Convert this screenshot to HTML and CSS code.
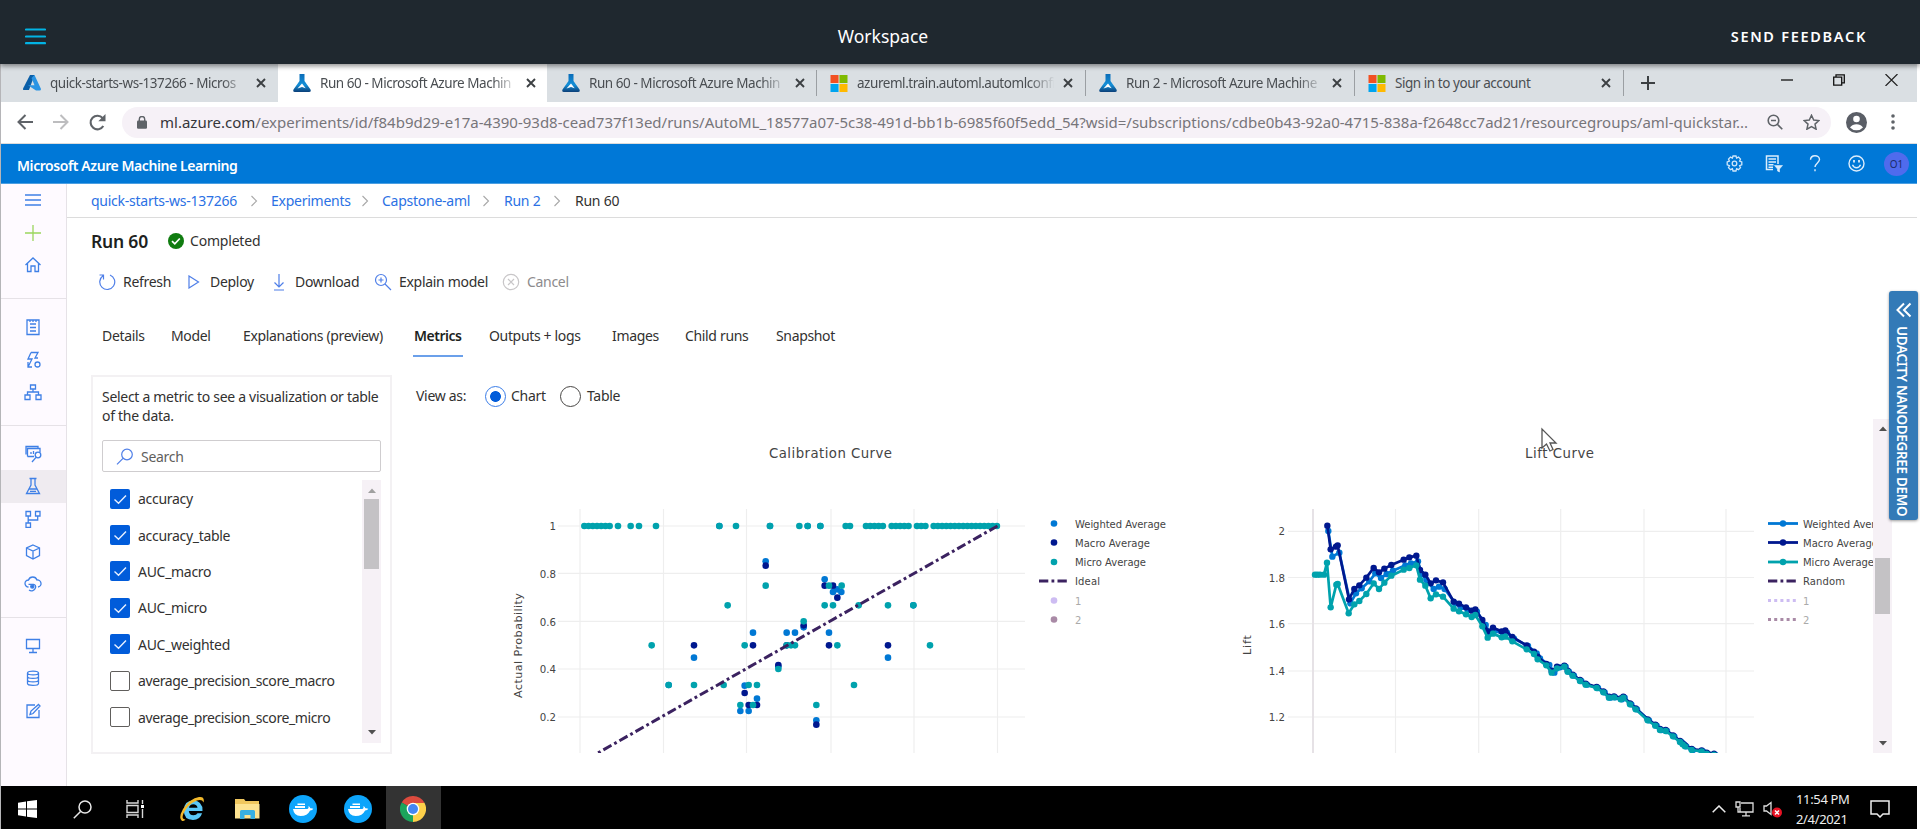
FILE: index.html
```html
<!DOCTYPE html>
<html lang="en">
<head>
<meta charset="utf-8">
<title>Workspace</title>
<link rel="stylesheet" href="styles.css">
</head>
<body>
<svg width="0" height="0" class="defs">
  <defs>
    <linearGradient id="flaskFill" x1="0" y1="0" x2="0" y2="1"><stop offset="0" stop-color="#0a6cb8"/><stop offset=".6" stop-color="#1490d8"/><stop offset="1" stop-color="#0b3f78"/></linearGradient>
    <symbol id="flask" viewBox="0 0 18 18"><path d="M6.500 0h5v7l6 8.500q1 2.500-1.500 2.500h-14q-2.500 0-1.500-2.500l6-8.500z" fill="url(#flaskFill)"/><path d="M9 9.500l3.700 4.800-3.700-1.300-4.500 1.600z" fill="#fff"/></symbol>
    <symbol id="ms" viewBox="0 0 18 18"><path d="M0 0h8.500v8.500H0z" fill="#f25022"/><path d="M9.500 0H18v8.500H9.500z" fill="#7fba00"/><path d="M0 9.500h8.500V18H0z" fill="#00a4ef"/><path d="M9.500 9.500H18V18H9.500z" fill="#ffb900"/></symbol>
    <symbol id="close" viewBox="0 0 10 10"><path d="M1 1l8 8M9 1l-8 8" stroke="#3c4043" stroke-width="1.900" fill="none"/></symbol>
    <symbol id="whale" viewBox="0 0 28 28"><circle cx="14" cy="14" r="14" fill="#0da5fb"/><path d="M4 14h14.500q1.500-.5 1-3 1.500.8 1.800 2.200 1.700-.2 3 .5-1 1.900-3.200 1.800Q18.500 21 11.500 21 5 21 4 14z" fill="#fff"/><path d="M6 11h10v2H6zM8.500 8.500h7.500V10H8.500z" fill="#fff"/></symbol>
    <symbol id="up" viewBox="0 0 8 5"><path d="M0 5L4 .5 8 5z"/></symbol>
    <symbol id="down" viewBox="0 0 8 5"><path d="M0 0l4 4.500L8 0z"/></symbol>
    <symbol id="crumb" viewBox="0 0 8 12"><path d="M1.500 1l5 5-5 5" fill="none" stroke="#a8a8a8" stroke-width="1.100"/></symbol>
    <symbol id="tick" viewBox="0 0 20 20"><path d="M4.500 10.500l4 3.700 7.500-7.700" fill="none" stroke="#e8f0ff" stroke-width="1.400"/></symbol>
  </defs>
</svg>

<header class="workspace-bar">
  <svg class="menu" width="21" height="17" viewBox="0 0 21 17"><path d="M1 1.500h19M1 8.500h19M1 15.200h19" stroke="#02b3e4" stroke-width="2.200" stroke-linecap="round"/></svg>
  <h1>Workspace</h1>
  <a class="feedback">SEND FEEDBACK</a>
</header>

<div class="desktop">
  <div class="tab-strip">
    <div class="tab first">
      <svg width="18" height="16" viewBox="0 0 18 16"><path d="M7 0h4.500L6 15H1Q-.4 15 .2 13.300z" fill="#0b5fa8"/><path d="M11.500 0L18 14q0 1.500-1.500 1.500H13L5 10.300h6.500L8.500 3z" fill="#2a94e4"/></svg>
      <span class="tab-title fade">quick-starts-ws-137266 - Micros</span><svg class="x" width="10" height="10"><use href="#close"/></svg>
    </div>
    <div class="tab active">
      <svg width="18" height="18"><use href="#flask"/></svg>
      <span class="tab-title fade">Run 60 - Microsoft Azure Machin</span><svg class="x" width="10" height="10"><use href="#close"/></svg>
    </div>
    <div class="tab third">
      <svg width="18" height="18"><use href="#flask"/></svg>
      <span class="tab-title fade">Run 60 - Microsoft Azure Machin</span><svg class="x" width="10" height="10"><use href="#close"/></svg>
    </div>
    <div class="tab lined">
      <svg width="18" height="17"><use href="#ms"/></svg>
      <span class="tab-title fade">azureml.train.automl.automlconfi</span><svg class="x" width="10" height="10"><use href="#close"/></svg>
    </div>
    <div class="tab lined">
      <svg width="18" height="18"><use href="#flask"/></svg>
      <span class="tab-title fade">Run 2 - Microsoft Azure Machine</span><svg class="x" width="10" height="10"><use href="#close"/></svg>
    </div>
    <div class="tab lined">
      <svg width="18" height="17"><use href="#ms"/></svg>
      <span class="tab-title">Sign in to your account</span><svg class="x" width="10" height="10"><use href="#close"/></svg>
    </div>
    <div class="new-tab"><svg width="14" height="14" viewBox="0 0 14 14"><path d="M7 0v14M0 7h14" stroke="#3c4043" stroke-width="2"/></svg></div>
    <div class="window-buttons">
      <svg width="12" height="12" viewBox="0 0 12 12"><path d="M0 6h12" stroke="#111" stroke-width="1.300"/></svg>
      <svg width="12" height="12" viewBox="0 0 12 12"><path d="M.7 3.200h8v8h-8zM3 3V.8h8.300v8H9" fill="none" stroke="#111" stroke-width="1.300"/></svg>
      <svg width="13" height="12" viewBox="0 0 13 12"><path d="M.5 0l12 12M12.500 0L.5 12" stroke="#222" stroke-width="1.200"/></svg>
    </div>
  </div>

  <div class="address-row">
    <svg width="16" height="16" viewBox="0 0 16 16"><path d="M16 8H1.500M8.500 1L1.500 8l7 7" fill="none" stroke="#5f6368" stroke-width="2"/></svg>
    <svg width="16" height="16" viewBox="0 0 16 16"><path d="M0 8h14.500M7.500 1l7 7-7 7" fill="none" stroke="#bdbdbf" stroke-width="2"/></svg>
    <svg width="17" height="17" viewBox="0 0 17 17"><path d="M14.300 12A6.800 6.800 0 1 1 13.700 4.200" fill="none" stroke="#5f6368" stroke-width="2.100"/><path d="M16.500 0v7.200H9.300z" fill="#5f6368"/></svg>
    <div class="url">
      <svg width="10" height="13" viewBox="0 0 10 13"><rect y="4.500" width="10" height="8.300" rx="1.200" fill="#5f6368"/><path d="M2.300 5V3.200a2.700 2.700 0 0 1 5.400 0V5" fill="none" stroke="#5f6368" stroke-width="1.400"/></svg>
      <span class="url-text"><b>ml.azure.com</b>/experiments/id/f84b9d29-e17a-4390-93d8-cead737f13ed/runs/AutoML_18577a07-5c38-491d-bb1b-6985f60f5edd_54?wsid=/subscriptions/cdbe0b43-92a0-4715-838a-f2648cc7ad21/resourcegroups/aml-quickstar...</span>
      <svg width="16" height="16" viewBox="0 0 16 16"><circle cx="6.500" cy="6.500" r="5.300" fill="none" stroke="#5f6368" stroke-width="1.600"/><path d="M10.300 10.300l5 5M4 6.500h5" stroke="#5f6368" stroke-width="1.600"/></svg>
      <svg width="17" height="16" viewBox="0 0 17 16"><path d="M8.500 1.300l2.200 4.800 5.200.5-3.900 3.500 1.100 5.100-4.600-2.700-4.600 2.700L5 10.100 1.100 6.600l5.200-.5z" fill="none" stroke="#5f6368" stroke-width="1.500"/></svg>
    </div>
    <svg width="21" height="21" viewBox="0 0 21 21"><circle cx="10.500" cy="10.500" r="10.500" fill="#5a5e66"/><circle cx="10.500" cy="7" r="3.300" fill="#fff"/><path d="M4 15.500q2.500-3.300 6.500-3.300t6.500 3.300q-2.500 2.800-6.500 2.800T4 15.500z" fill="#fff"/></svg>
    <svg width="4" height="16" viewBox="0 0 4 16" fill="#5f6368"><circle cx="2" cy="2" r="1.800"/><circle cx="2" cy="8" r="1.800"/><circle cx="2" cy="14" r="1.800"/></svg>
  </div>

  <div class="product-bar">
    <span class="product">Microsoft Azure Machine Learning</span>
    <svg class="gear" width="17" height="17" viewBox="0 0 17 17" fill="none" stroke="#cfe6fa" stroke-width="1.300"><circle cx="8.500" cy="8.500" r="2.300"/><path d="M7 1h3l.6 2 1.900-.9 2 2-.9 2 2.200.8v3l-2.200.8.9 1.900-2 2-1.900-.9L10 16H7l-.6-2.300-1.900.9-2-2 .9-1.900-2.200-.8v-3l2.200-.8-.9-2 2-2 1.900.9z"/></svg>
    <svg class="feed" width="18" height="18" viewBox="0 0 18 18" fill="none" stroke="#dcedfc" stroke-width="1.500"><path d="M8 14.500H1.500V1H13v8"/><path d="M3.500 4H11M3.500 7H11M3.500 9.700h5M3.500 12.300H8"/><path d="M9.500 10.500h8L14.500 14v3l-2-1v-2z" fill="#dcedfc" stroke-width=".6"/></svg>
    <svg class="help" width="12" height="17" viewBox="0 0 12 17" fill="none" stroke="#dcedfc" stroke-width="1.400"><path d="M1.500 4.800C1.500 2.300 3.500.8 6 .8s4.500 1.500 4.500 3.800C10.500 7.500 6 8.500 6 12M6 14.300v2"/></svg>
    <svg class="smile" width="17" height="17" viewBox="0 0 17 17" fill="none" stroke="#dcedfc" stroke-width="1.400"><circle cx="8.500" cy="8.500" r="7.500"/><path d="M4.500 9.800q1.200 3 4 3t4-3"/><path d="M6 5v2.500M11 5v2.500" stroke-width="1.800"/></svg>
    <span class="avatar">O1</span>
  </div>

  <div class="app">
    <nav class="rail">
      <div class="rail-item"><svg width="18" height="18" viewBox="0 0 18 18"><path d="M1 4h16M1 9h16M1 14h16"/></svg></div>
      <div class="rail-item"><svg class="green" width="18" height="18" viewBox="0 0 18 18"><path d="M1 9h16M9 1v16"/></svg></div>
      <div class="rail-item"><svg width="18" height="18" viewBox="0 0 18 18"><path d="M1.500 9L9 2l7.500 7M3.500 7.500V15.500H7V10h4v5.500h3.500V7.500"/></svg></div>
      <hr>
      <div class="rail-item"><svg width="18" height="18" viewBox="0 0 18 18"><path d="M3 2h12v14.500H3zM6 2v2M9 2v2M12 2v2M6 6h6M6 9.500h6M6 13h6"/></svg></div>
      <div class="rail-item"><svg width="18" height="18" viewBox="0 0 18 18"><path d="M7 1.500h7L11 7h3M7 1.500L4 8h4l-4 8M4 11v5h4"/><circle cx="13.500" cy="13.500" r="2.500"/></svg></div>
      <div class="rail-item"><svg width="18" height="18" viewBox="0 0 18 18"><path d="M6.500 2h5v4h-5zM1 12h5v4.500H1zM12 12h5v4.500h-5zM9 6v3M3.500 12V9h11v3"/></svg></div>
      <hr>
      <div class="rail-item"><svg width="18" height="18" viewBox="0 0 18 18"><path d="M2 9.500V1.500h12v2M3.500 11.500V3.500H16V7M10 11.500H3.500M7 7v2M9.500 6v3"/><circle cx="14" cy="10" r="2.800"/><path d="M12 12.300L8 17"/></svg></div>
      <div class="rail-item selected"><svg width="18" height="18" viewBox="0 0 18 18"><path d="M5.500 1.500h7M7 1.500V8L2.500 16.500h13L11 8V1.500M5 12h8M6 14.300h6"/></svg></div>
      <div class="rail-item"><svg width="18" height="18" viewBox="0 0 18 18"><path d="M2 1.500h4.500V6H2zM11.500 1.500H16V6h-4.500zM2 13h4.500v4.500H2zM4.200 6v7M13.700 6v4H4.200"/></svg></div>
      <div class="rail-item"><svg width="18" height="18" viewBox="0 0 18 18"><path d="M9 2l6.500 3v7.500L9 16l-6.500-3.500V5zM2.500 5L9 8l6.500-3M9 8v8"/></svg></div>
      <div class="rail-item"><svg width="18" height="18" viewBox="0 0 18 18"><path d="M4.500 12a3.500 3.500 0 0 1 0-7 4.500 4.500 0 0 1 8.500 0 3.500 3.500 0 0 1 1 7"/><circle cx="8.300" cy="11.500" r="1.600" fill="#2f74e0"/><path d="M4.500 9.300H9.500a2.500 2.500 0 0 1 2 3.500 4.200 4.200 0 0 1-6.500 2.200"/></svg></div>
      <hr>
      <div class="rail-item"><svg width="18" height="18" viewBox="0 0 18 18"><path d="M2.500 2.500h13v9h-13zM9 11.500v4M5 15.500h8"/></svg></div>
      <div class="rail-item"><svg width="18" height="18" viewBox="0 0 18 18"><path d="M3.500 4c0-2.500 11-2.500 11 0v10.500c0 2.500-11 2.500-11 0zM3.500 4c0 2.500 11 2.500 11 0M3.500 7.500c0 2.500 11 2.500 11 0M3.500 11c0 2.500 11 2.500 11 0"/></svg></div>
      <div class="rail-item"><svg width="18" height="18" viewBox="0 0 18 18"><path d="M11 3H3v12.500h12V8M6 12.500l1-3.500 7.500-6.500L16 4l-7 7.500z"/></svg></div>
    </nav>

    <main class="main">
      <div class="crumbs">
        <a>quick-starts-ws-137266</a><svg width="8" height="12"><use href="#crumb"/></svg>
        <a>Experiments</a><svg width="8" height="12"><use href="#crumb"/></svg>
        <a>Capstone-aml</a><svg width="8" height="12"><use href="#crumb"/></svg>
        <a>Run 2</a><svg width="8" height="12"><use href="#crumb"/></svg>
        <span>Run 60</span>
      </div>

      <div class="run-head">
        <h2>Run 60</h2>
        <svg width="16" height="16" viewBox="0 0 16 16"><circle cx="8" cy="8" r="8" fill="#107c10"/><path d="M4 8.200l2.800 2.600 5-5.300" fill="none" stroke="#fff" stroke-width="1.700"/></svg>
        <span>Completed</span>
      </div>

      <div class="actions">
        <svg width="18" height="18" viewBox="0 0 18 18"><path d="M12 2a7.500 7.500 0 1 1-7 .8M5.500 6.500V2H1.500"/></svg><span>Refresh</span>
        <svg width="12" height="14" viewBox="0 0 12 14"><path d="M1 1l9.500 6L1 13z"/></svg><span>Deploy</span>
        <svg width="12" height="17" viewBox="0 0 12 17"><path d="M6 0v13M1.500 8.500L6 13l4.500-4.500M1 16h10"/></svg><span>Download</span>
        <svg width="18" height="18" viewBox="0 0 18 18"><circle cx="7" cy="7" r="5.500"/><path d="M11 11l6 6M4.500 7h5M7 4.500v5"/></svg><span>Explain model</span>
        <svg class="off" width="18" height="18" viewBox="0 0 18 18"><circle cx="9" cy="9" r="7.700"/><path d="M6 6l6 6M12 6l-6 6"/></svg><span class="off">Cancel</span>
      </div>

      <div class="pivots">
        <span>Details</span><span>Model</span><span>Explanations (preview)</span><span class="current">Metrics</span><span>Outputs + logs</span><span>Images</span><span>Child runs</span><span>Snapshot</span>
      </div>

      <div class="body">
        <section class="picker">
          <p><span>Select a metric to see a visualization or table</span><br><span>of the data.</span></p>
          <div class="search"><svg width="18" height="17" viewBox="0 0 18 17"><circle cx="11" cy="6.500" r="5.300"/><path d="M7 10.300L1 16.300"/></svg><span>Search</span></div>
          <div class="list">
            <ul>
              <li><i class="box on"><svg width="20" height="20"><use href="#tick"/></svg></i><span>accuracy</span></li>
              <li><i class="box on"><svg width="20" height="20"><use href="#tick"/></svg></i><span>accuracy_table</span></li>
              <li><i class="box on"><svg width="20" height="20"><use href="#tick"/></svg></i><span>AUC_macro</span></li>
              <li><i class="box on"><svg width="20" height="20"><use href="#tick"/></svg></i><span>AUC_micro</span></li>
              <li><i class="box on"><svg width="20" height="20"><use href="#tick"/></svg></i><span>AUC_weighted</span></li>
              <li><i class="box"></i><span class="long">average_precision_score_macro</span></li>
              <li><i class="box"></i><span class="long">average_precision_score_micro</span></li>
            </ul>
            <div class="scroll small"><svg width="8" height="5" fill="#a0a0a0"><use href="#up"/></svg><i class="thumb"></i><svg class="end" width="8" height="5" fill="#505050"><use href="#down"/></svg></div>
          </div>
        </section>

        <section class="results">
          <div class="view-as">
            <span>View as:</span><i class="radio on"></i><span>Chart</span><i class="radio"></i><span>Table</span>
          </div>
          <div class="charts">
            <svg class="chart" id="calibration" width="800" height="334" viewBox="400 419 800 334">
              <text class="title" x="769" y="458" textLength="123">Calibration Curve</text>
              <path class="grid" d="M580 509v244M663.500 509v244M746.500 509v244M831 509v244M914 509v244M997.500 509v244M558 526h467M558 573.300h467M558 621.300h467M558 669h467M558 717h467"/>
              <g class="ticks"><text x="556" y="530">1</text><text x="556" y="577.500">0.8</text><text x="556" y="625.500">0.6</text><text x="556" y="673">0.4</text><text x="556" y="721">0.2</text></g>
              <text class="axis" transform="translate(522 698) rotate(-90)" textLength="105">Actual Probability</text>
              <g class="dots"></g>
              <path class="ideal" d="M997.500 526L597 753.500"/>
              <g class="legend">
                <circle cx="1054" cy="523.500" r="3.300" fill="#0078d4"/><circle cx="1054" cy="542.500" r="3.300" fill="#00188f"/><circle cx="1054" cy="562" r="3.300" fill="#00a2ad"/>
                <path class="ideal" d="M1039 581h28.500"/>
                <circle cx="1054" cy="600.500" r="3.300" fill="#cdbcf2"/><circle cx="1054" cy="619.500" r="3.300" fill="#a98aa6"/>
                <text x="1075" y="528" textLength="91">Weighted Average</text><text x="1075" y="547" textLength="75">Macro Average</text><text x="1075" y="566" textLength="71">Micro Average</text><text x="1075" y="585" textLength="25">Ideal</text><text class="dim" x="1075" y="604.500">1</text><text class="dim" x="1075" y="623.500">2</text>
              </g>
            </svg>
            <svg class="chart" id="lift" width="673" height="334" viewBox="1200 419 673 334">
              <text class="title" x="1525" y="458" textLength="69">Lift Curve</text>
              <path class="grid" d="M1395.500 509v244M1478.700 509v244M1560.700 509v244M1644 509v244M1726 509v244M1288 531.300h466M1288 577.500h466M1288 623.700h466M1288 671h466M1288 717h466"/>
              <path class="zero" d="M1313 509v244"/>
              <g class="ticks"><text x="1285" y="535">2</text><text x="1285" y="581.500">1.8</text><text x="1285" y="628">1.6</text><text x="1285" y="675">1.4</text><text x="1285" y="721">1.2</text></g>
              <text class="axis" transform="translate(1251 655) rotate(-90)" textLength="20">Lift</text>
              <g class="lines"></g>
              <g class="legend">
                <g class="keys"><path d="M1768 523.500h30" stroke="#0078d4"/><circle cx="1783" cy="523.500" r="3.200" fill="#0078d4"/><path d="M1768 542.500h30" stroke="#00188f"/><circle cx="1783" cy="542.500" r="3.200" fill="#00188f"/><path d="M1768 562h30" stroke="#00a2ad"/><circle cx="1783" cy="562" r="3.200" fill="#00a2ad"/>
                <path class="ideal" d="M1768 581h28.500"/><path class="dotted" d="M1768 600.500h28.500" stroke="#cdbcf2"/><path class="dotted" d="M1768 619.500h28.500" stroke="#a98aa6"/></g>
                <text x="1803" y="528" textLength="91">Weighted Average</text><text x="1803" y="547" textLength="75">Macro Average</text><text x="1803" y="566" textLength="71">Micro Average</text><text x="1803" y="585" textLength="42">Random</text><text class="dim" x="1803" y="604.500">1</text><text class="dim" x="1803" y="623.500">2</text>
              </g>
              <path d="M1542 429v19l4.500-4 3.500 7 3-1.500-3-6.500h6z" fill="#fff" stroke="#555" stroke-width="1.300"/>
            </svg>
            <div class="scroll large"><svg width="8" height="5" fill="#505050"><use href="#up"/></svg><i class="thumb"></i><svg class="end" width="8" height="5" fill="#505050"><use href="#down"/></svg></div>
          </div>
        </section>
      </div>
    </main>
  </div>

  <footer class="taskbar">
    <div class="cell"><svg width="19" height="18" viewBox="0 0 19 18" fill="#fff"><path d="M0 2.700L8 1.500v7H0zM9 1.300L19 0v8.500H9zM0 9.500h8v7L0 15.300zM9 9.500h10V18L9 16.700z"/></svg></div>
    <div class="cell"><svg width="19" height="19" viewBox="0 0 19 19" fill="none" stroke="#e8e8e8" stroke-width="1.500"><circle cx="12" cy="7" r="6"/><path d="M7.500 11.500L.8 18.300"/></svg></div>
    <div class="cell views"><svg width="19" height="18" viewBox="0 0 19 18" fill="none" stroke="#d8d8d8" stroke-width="1.400"><path d="M1 0v3h11V0M1 18v-3h11v3M1 5.500h11v7H1zM16.500 0v4M16.500 9v9"/><path d="M15 5h3v3h-3z" fill="#fff" stroke="none"/></svg></div>
    <div class="cell"><svg width="27" height="26" viewBox="0 0 27 26"><path d="M23.500 15H9.800q.4 4.200 4.700 4.200 3 0 4-1.900h4.600Q21 24 14 24 4.800 24 4.800 14.300 5 4.800 14.200 4.500q9.800.5 9.300 10.500zM10 11.700h8.500q-.5-3.500-4.200-3.500T10 11.700z" fill="#5ac8f7"/><path d="M3 25Q-1 22 4 13 11 2.500 20 1q6-.8 4.500 5.500Q23.500 3 18 4.500 9 8 4.500 17.500 2 23.500 6.500 23.500 5 25.300 3 25z" fill="#f2b92c"/></svg></div>
    <div class="cell"><svg width="25" height="20" viewBox="0 0 25 20"><path d="M0 2V0h9l1.500 2H24v17H0z" fill="#f0c75e"/><path d="M0 5h24.500v14.500H0z" fill="#fde391"/><path d="M5 20v-7.500q0-1.500 1.500-1.500h12q1.500 0 1.500 1.500V20h-4.500v-4h-6v4z" fill="#38b0e3"/></svg></div>
    <div class="cell"><svg width="28" height="28"><use href="#whale"/></svg></div>
    <div class="cell"><svg width="28" height="28"><use href="#whale"/></svg></div>
    <div class="cell lit"><svg width="26" height="26" viewBox="0 0 26 26"><path d="M13 13L1.740 6.500A13 13 0 0 1 24.260 6.500z" fill="#dd4b3e"/><path d="M13 13L24.260 6.500A13 13 0 0 1 13 26z" fill="#fdd04a"/><path d="M13 13v13A13 13 0 0 1 1.740 6.500z" fill="#1ca45c"/><path d="M13 7h11.500l-6 9-5.500 10 5-9z" fill="#fdd04a"/><circle cx="13" cy="13" r="6.300" fill="#fff"/><circle cx="13" cy="13" r="5" fill="#4587f3"/></svg></div>
    <div class="tray">
      <svg width="14" height="8" viewBox="0 0 14 8" fill="none" stroke="#eee" stroke-width="1.500"><path d="M.7 7.200L7 1l6.300 6.200"/></svg>
      <svg width="19" height="16" viewBox="0 0 19 16" fill="none" stroke="#ddd" stroke-width="1.300"><path d="M6 2h12v9H5V7M11 11v3.500M7 14.800h8M1 1h4v5H1zM3 6v5h2"/></svg>
      <svg width="20" height="17" viewBox="0 0 20 17"><path d="M1 5h2.500L8 1.500v12L3.500 10H1z" fill="none" stroke="#ddd" stroke-width="1.300"/><circle cx="14" cy="11.500" r="5" fill="#e81123"/><path d="M12 9.500l4 4M16 9.500l-4 4" stroke="#fff" stroke-width="1.500"/></svg>
      <div class="clock"><span>11:54 PM</span><span>2/4/2021</span></div>
      <svg width="20" height="18" viewBox="0 0 20 18" fill="none" stroke="#eee" stroke-width="1.500"><path d="M1 1h18v13h-6l-3 3-3-3H1z"/></svg>
    </div>
  </footer>
</div>

<aside class="side-tab">
  <svg width="16" height="16" viewBox="0 0 16 16"><path d="M8 1.500L1.500 8 8 14.500M14.500 1.500L8 8l6.500 6.500" fill="none" stroke="#fff" stroke-width="2"/></svg>
  <span>UDACITY NANODEGREE DEMO</span>
</aside>
<script src="charts.js"></script>
</body>
</html>
```
FILE: charts.js
```js
const NS = 'http://www.w3.org/2000/svg';
const BLUE = '#0078d4', NAVY = '#00188f', TEAL = '#00a2ad';

function add(parent, name, attrs) {
  const el = document.createElementNS(NS, name);
  for (const key in attrs) el.setAttribute(key, attrs[key]);
  parent.appendChild(el);
}

// Calibration scatter, in thirds of a pixel from the plot corner at (500, 430).
const weighted = [[797,394],[582,683],[759,608],[734,767],[721,843],[746,843],[771,806],[860,608],[885,608],[911,592],[835,710],[949,871],[974,448],[999,486],[1012,478],[1024,486],[987,608],[1164,683],[506,765],[658,288],[810,288],[923,288],[961,288],[1240,526]];
const macro = [[797,407],[582,646],[759,646],[734,789],[746,825],[771,825],[835,705],[911,586],[949,884],[974,467],[999,467],[1012,503],[987,646],[1164,646],[860,646]];
const micro = [[797,467],[683,526],[455,646],[506,765],[582,765],[671,765],[734,646],[746,765],[771,765],[721,825],[759,825],[835,717],[860,646],[873,646],[885,646],[911,574],[949,825],[974,526],[999,526],[1012,646],[987,467],[1025,467],[1076,526],[1164,526],[1240,526],[1290,646],[1062,765]];
const run = (from, to) => { for (let x = from; x <= to + 2; x += 12.65) micro.push([x, 288]); };
[354,392,417,468,658,708,810,898,923,961,1037,1050].forEach(x => micro.push([x, 288]));
run(253, 329); run(1098, 1154); run(1175, 1228); run(1251, 1277); run(1301, 1493);

const dots = document.querySelector('#calibration .dots');
[[weighted, BLUE], [macro, NAVY], [micro, TEAL]].forEach(([points, fill]) =>
  points.forEach(([x, y]) => add(dots, 'circle', { cx: 500 + x / 3, cy: 430 + y / 3, r: 3.3, fill })));

// Lift curves, in thirds of a pixel from (1220, 410).
const tail = [[1033,770],[1043,785],[1058,797],[1080,813],[1097,824],[1130,834],[1150,847],[1167,863],[1182,862],[1202,868],[1210,863],[1230,883],[1247,898],[1283,931],[1306,947],[1320,960],[1337,963],[1359,979],[1380,996],[1388,1003],[1395,1009],[1415,1020],[1445,1024],[1460,1031],[1482,1034]];
const shift = (points, dx, dy) => points.map(([x, y]) => [x + dx, y + dy]);
const series = [
  [BLUE, [[325,363],[337,440],[358,428],[391,580],[408,550],[425,535],[448,514],[466,490],[483,504],[500,492],[519,482],[556,466],[573,460],[594,454],[605,492],[619,510],[641,537],[657,530],[674,537],[706,580],[722,592],[743,600],[771,605],[797,645],[808,668],[824,662],[850,672],[861,668],[882,686],[924,708],[950,730],[960,745],[988,765],[1003,788],[1020,772]].concat(shift(tail, 4, 0))],
  [NAVY, [[322,347],[332,418],[348,410],[353,406],[387,568],[403,537],[418,526],[439,503],[461,474],[477,487],[493,476],[514,465],[551,449],[568,442],[589,437],[600,480],[616,494],[632,520],[648,511],[669,517],[701,575],[717,581],[738,592],[755,602],[766,598],[787,630],[803,664],[819,653],[845,664],[856,661],[877,681],[920,706],[942,725],[953,740],[979,762],[995,783],[1011,770]].concat(shift(tail, 0, -3))],
  [TEAL, [[285,494],[292,494],[300,494],[312,494],[321,458],[332,592],[349,524],[353,522],[386,610],[403,583],[418,573],[439,552],[461,520],[477,537],[493,518],[514,497],[551,479],[568,474],[589,466],[600,509],[616,527],[632,565],[648,553],[669,560],[701,596],[717,604],[738,613],[755,621],[766,615],[787,649],[803,683],[819,671],[845,682],[856,680],[877,694],[920,718],[942,732],[953,748],[979,766],[995,788],[1011,775]].concat(tail)]
];
const lines = document.querySelector('#lift .lines');
series.forEach(([color, raw]) => {
  const points = raw.map(([x, y]) => [1220 + x / 3, 410 + y / 3]);
  add(lines, 'polyline', { points: points.join(' '), stroke: color });
  points.forEach(([cx, cy]) => add(lines, 'circle', { cx, cy, r: 3.2, fill: color }));
});
```
FILE: styles.css
```css
* { box-sizing: border-box; }
body { margin: 0; width: 1920px; height: 829px; overflow: hidden; background: #fff; color: #323130; font: 14px/20px "Noto Sans", "Open Sans", sans-serif; position: relative; }
span, a, h1, h2 { white-space: nowrap; }
svg { display: block; flex: none; }
.defs { position: absolute; }

.workspace-bar { position: relative; z-index: 2; height: 64px; padding: 8px 53px 0 25px; background: #1f282f; box-shadow: 0 2px 5px rgba(0, 0, 0, .45); display: grid; grid-template-columns: 120px 1fr 120px; align-items: center; color: #fff; }
.workspace-bar h1 { margin: 0; font-size: 17.500px; font-weight: 400; line-height: 24px; text-align: center; padding-right: 126px; }
.feedback { justify-self: end; font-size: 14.500px; font-weight: 600; letter-spacing: 1.700px; }

.desktop { width: 1917px; position: relative; }
.desktop::before { content: ""; position: absolute; left: 0; top: 0; width: 1px; height: 100%; background: #b5b5b8; }

.tab-strip { height: 38px; background: #dadfe3; display: flex; color: #4a4e52; }
.tab { width: 269px; display: flex; align-items: center; padding-left: 13px; font-size: 13.500px; }
.tab.first { width: 278px; padding-left: 23px; border-radius: 0 0 8px 0; }
.tab.active { background: #fff; padding-left: 15px; }
.tab.third { width: 269px; padding-left: 15px; }
.tab.lined, .new-tab { border-left: 1px solid #9b9fa3; border-image: linear-gradient(transparent 7px, #9b9fa3 7px, #9b9fa3 31px, transparent 31px) 1; }
.tab-title { width: 197px; margin-left: 9px; overflow: hidden; letter-spacing: -.45px; }
.tab-title.fade { -webkit-mask-image: linear-gradient(90deg, #000 172px, transparent 198px); mask-image: linear-gradient(90deg, #000 172px, transparent 198px); }
.tab .x { margin-left: 9px; }
.new-tab { display: flex; align-items: center; padding-left: 17px; }
.window-buttons { margin-left: auto; display: flex; gap: 40px; padding: 10px 19px 0 0; }

.address-row { height: 42px; display: flex; align-items: center; padding-left: 17px; padding-bottom: 1px; border-bottom: 1px solid #dcdcdc; }
.address-row > svg + svg { margin-left: 20px; }
.url { width: 1709px; height: 31px; border-radius: 16px; background: #f6f1f7; margin-left: 16px; margin-right: 15px; padding-left: 15px; display: flex; align-items: center; color: #77757a; }
.url-text { width: 1588px; margin: 0 19px 0 13px; font-size: 15px; }
.url-text b { color: #35363a; font-weight: 400; }
.url svg + svg { margin-left: 20px; }
.address-row > .url + svg + svg { margin-left: 24px; }

.product-bar { height: 40px; background: #0078d7; color: #fff; display: flex; align-items: center; padding: 0 8px 0 17px; border-bottom: 1px solid #4b9fe2; }
.product { margin-right: auto; font-size: 14px; font-weight: 600; letter-spacing: -.42px; padding-top: 4px; }
.gear { margin-right: 22px; }
.feed { margin-right: 26px; }
.help { margin-right: 27px; }
.smile { margin-right: 19px; }
.avatar { width: 25px; height: 24px; border-radius: 50%; background: #4f6bed; color: #1c2b6a; font-size: 10px; line-height: 24px; text-align: center; }

.app { height: 602px; display: flex; }
.rail { width: 67px; background: #fefaff; border-right: 1px solid #e6e2e7; }
.rail-item { height: 32.600px; display: flex; align-items: center; justify-content: center; }
.rail-item.selected { background: #efebf0; }
.rail svg { fill: none; stroke: #3f80e6; stroke-width: 1.300; }
.rail svg.green { stroke: #9bd65e; }
.rail hr { border: 0; height: 1px; background: #e6e2e7; margin: 16.500px 0 11.500px; }

.main { flex: 1; }
.crumbs { height: 34px; border-bottom: 1px solid #dcdcdc; padding-left: 24px; display: grid; grid-template-columns: 159px 21px 90px 21px 100px 22px 49px 22px 60px; align-items: center; letter-spacing: -.25px; }
.crumbs a { color: #2b71e4; }
.run-head { height: 45px; padding-left: 24px; display: grid; grid-template-columns: 77px 22px 100px; align-items: center; letter-spacing: -.2px; }
.run-head h2 { margin: 0; font-size: 17.500px; font-weight: 600; letter-spacing: -.2px; color: #201f1e; }
.actions { height: 36px; margin-top: 1px; padding-left: 31px; display: grid; grid-template-columns: 25px 65px 22px 63px 22px 79px 25px 103px 25px 60px; align-items: center; letter-spacing: -.3px; }
.actions svg { fill: none; stroke: #4f7fe8; stroke-width: 1.200; }
.actions svg.off { stroke: #c8c6c8; }
.actions .off { color: #8d8b8d; }
.pivots { height: 40px; margin-top: 17px; padding-left: 35px; display: grid; grid-template-columns: 69px 72px 170px 76px 123px 73px 91px 80px; letter-spacing: -.34px; line-height: 38px; }
.pivots span { justify-self: start; }
.pivots .current { font-weight: 600; color: #201f1e; border-bottom: 2px solid #6ba0ea; width: 50px; padding-left: 1px; letter-spacing: -.5px; height: 40px; }

.body { display: flex; padding: 17px 0 0 24px; }
.picker { width: 301px; height: 379px; margin-top: 1px; border: 2px solid #f3f1f3; padding: 10px 9px 0; margin-right: 8px; }
.picker p { margin: 0; line-height: 19px; letter-spacing: -.3px; }
.search { height: 32px; width: 279px; margin-top: 15px; border: 1px solid #cfcdcf; border-radius: 2px; display: flex; align-items: center; padding-left: 13px; gap: 7px; color: #605e5c; letter-spacing: -.3px; }
.search svg { fill: none; stroke: #4f7fe8; stroke-width: 1.200; }
.search span { padding-top: 2px; }
.list { display: flex; justify-content: space-between; margin-top: 8px; width: 279px; }
ul { list-style: none; margin: 0; padding: .5px 0 0 8px; }
li { height: 36.400px; display: flex; align-items: center; gap: 8px; letter-spacing: -.3px; }
li span { padding-top: 1px; }
li .long { letter-spacing: -.4px; }
.box { width: 20px; height: 20px; border: 1.500px solid #605e5c; border-radius: 2px; }
.box.on { background: #015cda; border: 0; }
.scroll { background: #f6f1f6; display: flex; flex-direction: column; align-items: center; }
.scroll .end { margin-top: auto; }
.scroll.small { width: 19px; height: 263px; padding: 8px 0; }
.scroll.small .thumb { width: 15px; height: 70px; background: #c4c2c5; margin-top: 6px; }
.scroll.large { width: 19px; height: 334px; padding: 7px 0; }
.scroll.large .thumb { width: 15px; height: 56px; background: #c4c2c5; margin-top: 127px; }

.results { flex: 1; }
.view-as { height: 45px; padding: 0 0 1px 16px; display: grid; grid-template-columns: 69px 26px 49px 27px 40px; align-items: center; letter-spacing: -.3px; }
.radio { width: 21px; height: 21px; border: 1.500px solid #484644; border-radius: 50%; }
.radio.on { border-color: #3a7de8; background: radial-gradient(circle, #015cda 5px, transparent 5.800px); }
.charts { display: flex; }
.chart text { font-family: "DejaVu Sans", Verdana, sans-serif; fill: #444; }
.chart .title { font-size: 13.300px; }
.chart .ticks { font-size: 10.200px; text-anchor: end; }
.chart .axis { font-size: 11.200px; }
.chart .legend { font-size: 10px; }
.chart .legend .dim { fill: #aaa; }
.grid { stroke: #eee; stroke-width: 1.200; }
.zero { stroke: #e6e2e6; stroke-width: 2; }
.ideal, .keys .ideal { stroke: #3b2260; stroke-width: 3; fill: none; stroke-dasharray: 9.300 3.200 2.800 3.200; }
.keys .dotted { stroke-width: 3; stroke-dasharray: 3 3.200; }
.lines polyline { fill: none; stroke-width: 2.700; }
.keys path { stroke-width: 2.800; }

.taskbar { height: 43px; background: #000; display: flex; color: #eee; }
.cell { width: 55.100px; display: flex; align-items: center; justify-content: center; padding-top: 3px; }
.views { padding-right: 4px; }
.cell.lit { background: #333; }
.tray { margin-left: auto; display: flex; align-items: center; padding: 3px 27px 0 0; }
.tray svg { margin-right: 9px; }
.clock { width: 71px; margin-left: 3px; margin-right: 4px; padding-left: 1px; display: flex; flex-direction: column; font-size: 13px; line-height: 20px; letter-spacing: -.35px; }
.tray .clock + svg { margin-right: 0; }

.side-tab { position: absolute; z-index: 3; left: 1889px; top: 291px; width: 29px; height: 229px; background: #337ab7; border-radius: 3px; box-shadow: 0 1px 3px rgba(0, 0, 0, .4); color: #fff; display: flex; flex-direction: column; align-items: center; padding-top: 11px; }
.side-tab span { writing-mode: vertical-rl; font-size: 13.500px; line-height: 20px; font-weight: 600; margin-top: 8px; padding-right: 3px; letter-spacing: -.32px; }
```
